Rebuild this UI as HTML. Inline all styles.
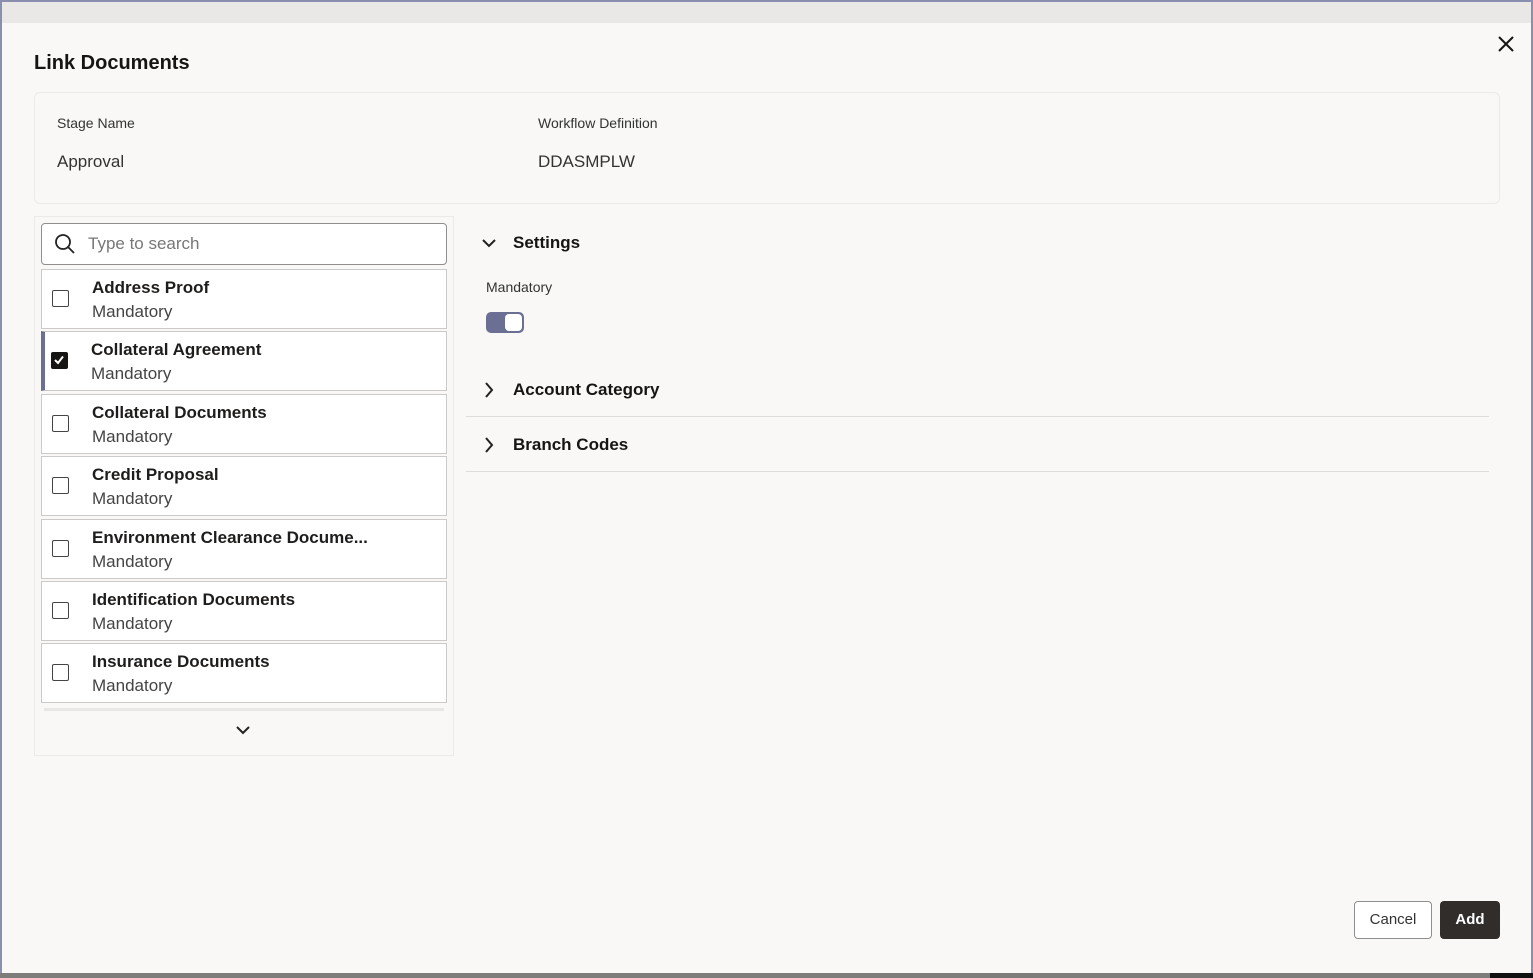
<!DOCTYPE html>
<html><head><style>
*{box-sizing:border-box;margin:0;padding:0}
body{width:1533px;height:978px;background:#f9f8f6;font-family:"Liberation Sans",sans-serif;color:#161513;position:relative;overflow:hidden}
.a{position:absolute}
.item{position:absolute;left:41px;width:406px;height:60px;background:#fff;border:1px solid #cbcac8}
.item .cb{position:absolute;left:10px;top:20px;width:17px;height:17px;border:1.5px solid #444;border-radius:2px;background:#fff}
.item .t{position:absolute;left:50px;top:8px;font-size:17px;font-weight:bold;color:#1f1d1b}
.item .s{position:absolute;left:50px;top:32px;font-size:17px;color:#444}
.sec{position:absolute;left:513px;font-size:17px;font-weight:bold}
</style></head><body>
<div class="a" style="left:0;top:0;width:1533px;height:23px;background:#e9e8e6;border-top:2px solid #8a8fb0"></div>
<div class="a" style="left:0;top:0;width:2px;height:978px;background:#8a8fb0"></div>
<div class="a" style="right:0;top:0;width:2px;height:978px;background:#8a8fb0"></div>
<div class="a" style="left:0;top:973px;width:1533px;height:5px;background:#7d7c7a"></div>
<div class="a" style="left:1490px;top:973px;width:43px;height:5px;background:#111"></div>
<div class="a" style="left:34px;top:52px;font-size:20px;font-weight:bold">Link Documents</div>
<svg class="a" style="left:1497px;top:35px" width="18" height="18"><path d="M2 2L16 16M16 2L2 16" stroke="#161513" stroke-width="2"/></svg>
<div class="a" style="left:34px;top:92px;width:1466px;height:112px;border:1px solid #ebeae8;border-radius:6px"></div>
<div class="a" style="left:57px;top:115px;font-size:14px;color:#333">Stage Name</div>
<div class="a" style="left:57px;top:152px;font-size:17px;color:#333">Approval</div>
<div class="a" style="left:538px;top:115px;font-size:14px;color:#333">Workflow Definition</div>
<div class="a" style="left:538px;top:152px;font-size:17px;color:#333">DDASMPLW</div>
<div class="a" style="left:34px;top:216px;width:420px;height:540px;border:1px solid #ebeae8"></div>
<div class="a" style="left:41px;top:223px;width:406px;height:42px;border:1px solid #8f8e8c;border-radius:4px;background:#fff"></div>
<svg class="a" style="left:54px;top:233px" width="22" height="22"><circle cx="9" cy="9" r="7" fill="none" stroke="#222" stroke-width="1.8"/><path d="M14 14L20 20" stroke="#222" stroke-width="1.8"/></svg>
<div class="a" style="left:88px;top:234px;font-size:17px;color:#777">Type to search</div>
<div class="item" style="top:269px"><div class="cb"></div><div class="t">Address Proof</div><div class="s">Mandatory</div></div>
<div class="item" style="top:331px;border-left:4px solid #6b6f93"><div class="cb" style="left:6px;background:#161513;border-color:#161513"><svg width="14" height="14" style="position:absolute;left:0;top:0"><path d="M3 7L6 10L11 3.5" fill="none" stroke="#fff" stroke-width="2"/></svg></div><div class="t" style="left:46px">Collateral Agreement</div><div class="s" style="left:46px">Mandatory</div></div>
<div class="item" style="top:394px"><div class="cb"></div><div class="t">Collateral Documents</div><div class="s">Mandatory</div></div>
<div class="item" style="top:456px"><div class="cb"></div><div class="t">Credit Proposal</div><div class="s">Mandatory</div></div>
<div class="item" style="top:519px"><div class="cb"></div><div class="t">Environment Clearance Docume...</div><div class="s">Mandatory</div></div>
<div class="item" style="top:581px"><div class="cb"></div><div class="t">Identification Documents</div><div class="s">Mandatory</div></div>
<div class="item" style="top:643px"><div class="cb"></div><div class="t">Insurance Documents</div><div class="s">Mandatory</div></div>
<div class="a" style="left:44px;top:708px;width:400px;height:3px;background:#e8e7e5"></div>
<svg class="a" style="left:236px;top:725px" width="14" height="10"><path d="M1 2L7 8L13 2" fill="none" stroke="#222" stroke-width="2"/></svg>
<svg class="a" style="left:482px;top:238px" width="14" height="10"><path d="M1 2L7 8L13 2" fill="none" stroke="#222" stroke-width="2"/></svg>
<div class="sec" style="top:233px">Settings</div>
<div class="a" style="left:486px;top:279px;font-size:14px;color:#333">Mandatory</div>
<div class="a" style="left:486px;top:312px;width:38px;height:21px;border-radius:5px;background:#6b6f93"></div>
<div class="a" style="left:505px;top:314px;width:17px;height:17px;border-radius:4px;background:#fff"></div>
<svg class="a" style="left:484px;top:382px" width="10" height="16"><path d="M2 1L8 8L2 15" fill="none" stroke="#222" stroke-width="2"/></svg>
<div class="sec" style="top:380px">Account Category</div>
<div class="a" style="left:466px;top:416px;width:1023px;height:1px;background:#dedddb"></div>
<svg class="a" style="left:484px;top:437px" width="10" height="16"><path d="M2 1L8 8L2 15" fill="none" stroke="#222" stroke-width="2"/></svg>
<div class="sec" style="top:435px">Branch Codes</div>
<div class="a" style="left:466px;top:471px;width:1023px;height:1px;background:#dedddb"></div>
<div class="a" style="left:1354px;top:901px;width:78px;height:38px;border:1px solid #8f8e8c;border-radius:4px;background:#fff;font-size:15px;text-align:center;line-height:36px;color:#333">Cancel</div>
<div class="a" style="left:1440px;top:901px;width:60px;height:38px;border-radius:4px;background:#312d2a;color:#fff;font-size:15px;font-weight:bold;text-align:center;line-height:38px">Add</div>
</body></html>
